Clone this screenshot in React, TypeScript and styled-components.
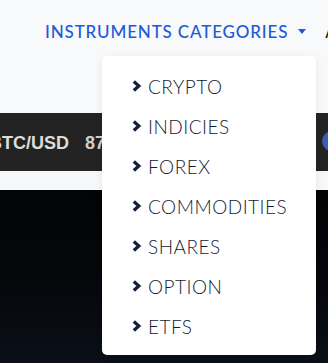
import React from "react";
import styled, { createGlobalStyle } from "styled-components";

const Global = createGlobalStyle`
  html, body { margin: 0; padding: 0; background: #f7f8fa; }
  body { width: 328px; height: 363px; overflow: hidden; font-family: Lato, "Open Sans", sans-serif; }
  #root { width: 328px; height: 363px; }
`;

const Page = styled.div`
  position: relative;
  width: 328px;
  height: 363px;
  overflow: hidden;
  display: flex;
  flex-direction: column;
  background: #f7f8fa;
`;

const Header = styled.header`
  height: 113px;
  flex: none;
  display: flex;
  align-items: flex-start;
  padding: 22px 0 0 45px;
  box-sizing: border-box;
  gap: 19px;
  white-space: nowrap;
  background: #f8f9fb;
`;

const NavItem = styled.div`
  position: relative;
  display: flex;
  align-items: center;
  gap: 10px;
  font-family: Lato, sans-serif;
  font-size: 17px;
  font-weight: 500;
  letter-spacing: 0.85px;
  color: #1d5bd6;
  line-height: 20px;
`;

const NavOther = styled(NavItem)`
  color: #222;
`;

const Caret = styled.span`
  width: 0;
  height: 0;
  border-left: 4.5px solid transparent;
  border-right: 4.5px solid transparent;
  border-top: 5px solid #1d5bd6;
  margin-top: -2px;
`;

const Ticker = styled.div`
  height: 58px;
  flex: none;
  background: #232323;
  display: flex;
  align-items: center;
  gap: 16px;
  margin-left: -11px;
  padding-top: 2px;
  box-sizing: border-box;
  white-space: nowrap;
`;

const Symbol = styled.span`
  font-family: "Liberation Sans", Arial, sans-serif;
  font-weight: 700;
  font-size: 18px;
  color: #dcdcdc;
`;

const Price = styled(Symbol)`
  color: #cfcfcf;
`;

const Badge = styled.span`
  position: absolute;
  left: 322px;
  top: 131px;
`;

const Spacer = styled.div`
  height: 19px;
  flex: none;
  background: #f7f8fa;
`;

const Hero = styled.div`
  flex: 1;
  background: linear-gradient(180deg, #030406 0%, #05070b 50%, #0b0f17 100%);
`;

const Menu = styled.ul`
  position: absolute;
  left: 102px;
  top: 56px;
  width: 214px;
  height: 299px;
  margin: 0;
  padding: 10px 0 0 0;
  box-sizing: border-box;
  list-style: none;
  background: #ffffff;
  border-radius: 5px;
  box-shadow: 0 2px 8px rgba(0, 0, 0, 0.08);
`;

const MenuItem = styled.li`
  height: 40px;
  display: flex;
  align-items: center;
  gap: 7px;
  padding-left: 30px;
  font-family: Lato, sans-serif;
  font-size: 19px;
  font-weight: 300;
  letter-spacing: 0.5px;
  color: #121b34;
`;

const Chevron = () => (
  <svg width="9" height="12" viewBox="0 0 9 12">
    <polyline points="1.8,1.6 6.8,6 1.8,10.4" fill="none" stroke="#13203c" strokeWidth="3.3" strokeLinejoin="miter" />
  </svg>
);

const items = ["CRYPTO", "INDICIES", "FOREX", "COMMODITIES", "SHARES", "OPTION", "ETFS"];

export default function App() {
  return (
    <>
      <Global />
      <Page>
        <Header>
          <NavItem>
            INSTRUMENTS CATEGORIES <Caret />
          </NavItem>
          <NavOther>ABOUT</NavOther>
        </Header>
        <Ticker>
          <Symbol>BTC/USD</Symbol>
          <Price>87,412.50</Price>
        </Ticker>
        <Spacer />
        <Hero />
        <Badge>
          <svg width="20" height="20" viewBox="0 0 20 20">
            <circle cx="10" cy="10" r="10" fill="#3d5bb0" />
          </svg>
        </Badge>
        <Menu>
          {items.map((t) => (
            <MenuItem key={t}>
              <Chevron />
              {t}
            </MenuItem>
          ))}
        </Menu>
      </Page>
    </>
  );
}
